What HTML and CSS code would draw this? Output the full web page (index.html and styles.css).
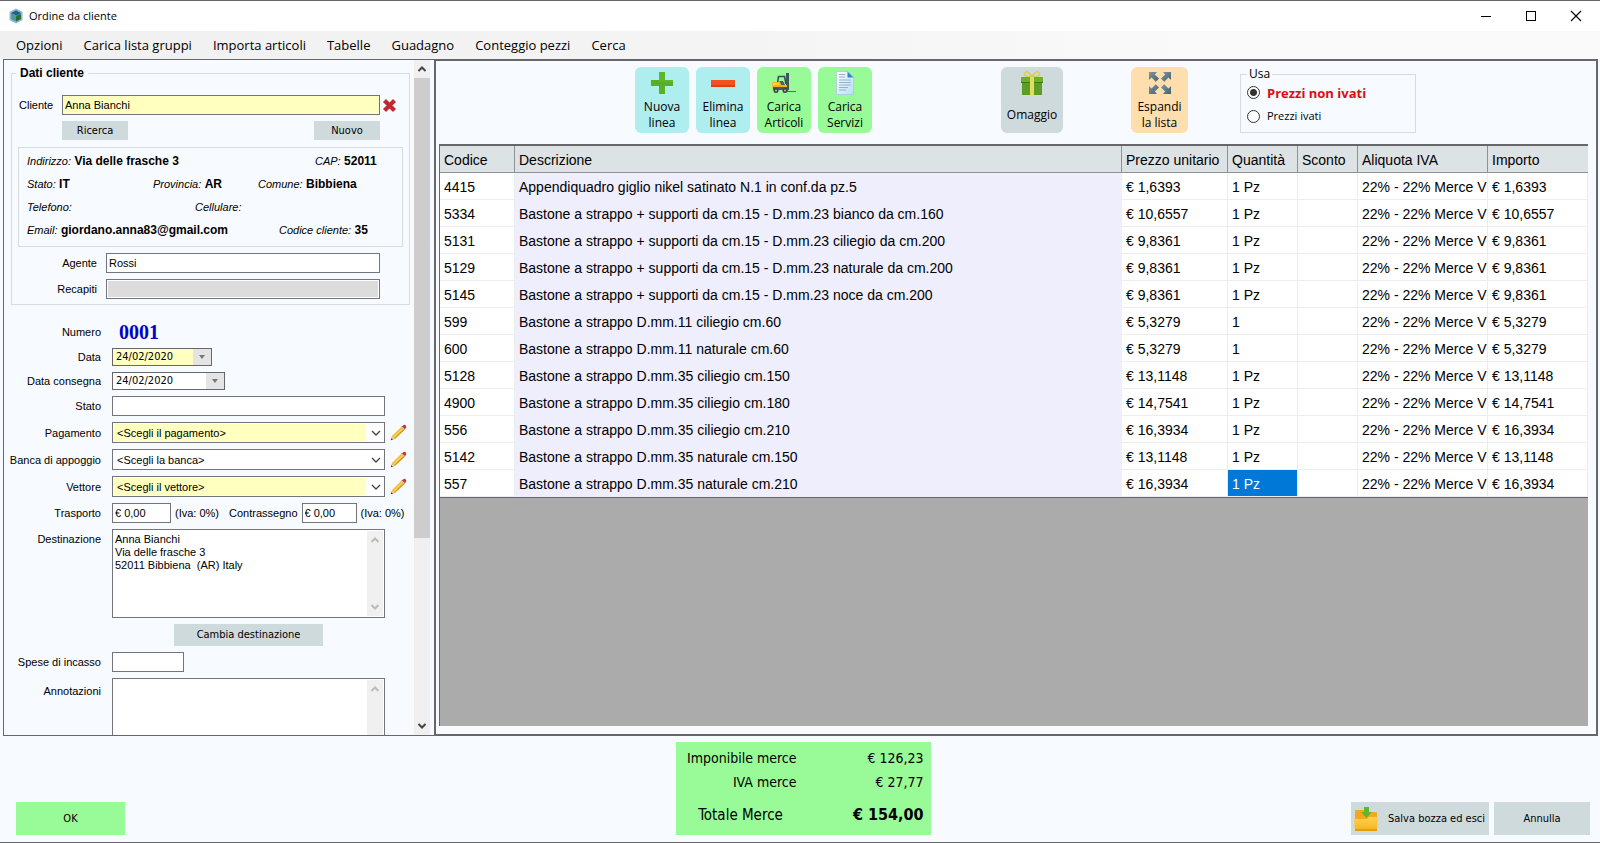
FILE: index.html
```html
<!DOCTYPE html>
<html lang="it">
<head>
<meta charset="utf-8">
<title>Ordine da cliente</title>
<link rel="stylesheet" href="styles.css">
</head>
<body>
<svg class="defs" width="0" height="0" aria-hidden="true">
  <defs>
    <linearGradient id="gPlus" x1="0" y1="0" x2="0" y2="1"><stop offset="0" stop-color="#4fae1c"/><stop offset="1" stop-color="#5fb02a"/></linearGradient>
    <linearGradient id="gDoc" x1="0" y1="0" x2="1" y2="1"><stop offset="0" stop-color="#ffffff"/><stop offset="1" stop-color="#b9dcf6"/></linearGradient>
    <linearGradient id="gArr" x1="0" y1="0" x2="1" y2="1"><stop offset="0" stop-color="#7f96a2"/><stop offset="1" stop-color="#46606e"/></linearGradient>
    <linearGradient id="gFold" x1="0" y1="0" x2="0" y2="1"><stop offset="0" stop-color="#ffd24a"/><stop offset="1" stop-color="#f9b320"/></linearGradient>
    <symbol id="pencil" viewBox="0 0 17 17">
      <path d="M1 16 L2 12 L12 2.2 L15 5 L5 14.8Z" fill="#f3bb2d"/>
      <path d="M2.8 13 L12.8 3.2 L14 4.2 L4 14Z" fill="#f9d45a"/>
      <path d="M4 14.6 L14 4.8 L15 5.6 L5 14.8Z" fill="#d88d1c"/>
      <path d="M11.4 2.8 L13 1.4 Q14.4 .2 15.8 1.4 Q17 2.8 15.6 4.4 L14.2 5.6Z" fill="#c8382c"/>
      <path d="M11 3.2 L11.9 2.3 L14.8 5.1 L13.9 6Z" fill="#c9c4bb"/>
      <path d="M.8 16.3 L2 12.2 L4.8 14.9Z" fill="#e8c79a"/>
      <path d="M.8 16.3 L1.3 14.2 L2.9 15.7Z" fill="#333"/>
    </symbol>
    <symbol id="chev" viewBox="0 0 10 10"><path d="M1 3 L5 7 L9 3" fill="none" stroke="currentColor" stroke-width="1.3"/></symbol>
    <symbol id="down" viewBox="0 0 10 10"><path d="M1.5 3 L5 6.5 L8.500 3" fill="none" stroke="currentColor" stroke-width="2"/></symbol>
    <symbol id="up" viewBox="0 0 10 10"><path d="M1.5 7 L5 3.500 L8.500 7" fill="none" stroke="currentColor" stroke-width="2"/></symbol>
  </defs>
</svg>

<header class="titlebar">
  <svg class="app-icon" width="16" height="16" viewBox="0 0 16 16" aria-hidden="true">
    <path d="M8 .5 L14.500 4 V12 L8 15.500 L1.500 12 V4Z" fill="#8db9c8"/>
    <path d="M8 2.500 L12.800 5 V11 L8 13.500 L3.200 11 V5Z" fill="#4a94b8"/>
    <path d="M3.200 5 L8 7.500 L12.800 5 L8 2.500Z" fill="#245f92"/>
    <path d="M8 8 L12.800 6 V11 L8 13.500Z" fill="#2d6b2f"/>
    <path d="M5 6 L8.500 7.500 L8 10 L6 9Z" fill="#63a843"/>
  </svg>
  <h1 class="title">Ordine da cliente</h1>
  <div class="window-buttons">
    <button class="win" aria-label="Riduci a icona"><svg width="12" height="12" viewBox="0 0 12 12"><path d="M1 6.500 H11" stroke="#000"/></svg></button>
    <button class="win" aria-label="Ingrandisci"><svg width="12" height="12" viewBox="0 0 12 12"><rect x="1.500" y="1.500" width="9" height="9" fill="none" stroke="#000"/></svg></button>
    <button class="win" aria-label="Chiudi"><svg width="12" height="12" viewBox="0 0 12 12"><path d="M1 1 L11 11 M11 1 L1 11" stroke="#000" stroke-width="1.100"/></svg></button>
  </div>
</header>

<nav class="menu">
  <button>Opzioni</button><button>Carica lista gruppi</button><button>Importa articoli</button><button>Tabelle</button><button>Guadagno</button><button>Conteggio pezzi</button><button>Cerca</button>
</nav>

<main class="main">
  <section class="side">
    <form class="form">
      <fieldset class="client">
        <legend>Dati cliente</legend>
        <div class="client-row">
          <label for="cliente">Cliente</label>
          <input id="cliente" class="box yellow" value="Anna Bianchi">
          <button type="button" class="clear" aria-label="Rimuovi cliente"><svg width="13" height="13" viewBox="0 0 13 13"><path d="M3 .5 L6.500 4 L10 .5 L12.500 3 L9 6.500 L12.500 10 L10 12.500 L6.500 9 L3 12.500 L.5 10 L4 6.500 L.5 3Z" fill="#c9252b" stroke="#a5161c" stroke-width=".8"/></svg></button>
        </div>
        <div class="client-buttons">
          <button type="button" class="btn small">Ricerca</button>
          <button type="button" class="btn small">Nuovo</button>
        </div>
        <div class="details">
          <div class="drow r1"><p><i>Indirizzo:</i> <b>Via delle frasche 3</b></p><p><i>CAP:</i> <b>52011</b></p></div>
          <div class="drow r2"><p><i>Stato:</i> <b>IT</b></p><p><i>Provincia:</i> <b>AR</b></p><p><i>Comune:</i> <b>Bibbiena</b></p></div>
          <div class="drow r3"><p><i>Telefono:</i></p><p><i>Cellulare:</i></p></div>
          <div class="drow r4"><p><i>Email:</i> <b>giordano.anna83@gmail.com</b></p><p><i>Codice cliente:</i> <b>35</b></p></div>
        </div>
        <div class="agent-row"><label for="agente">Agente</label><input id="agente" class="box" value="Rossi"></div>
        <div class="agent-row"><label for="recapiti">Recapiti</label><input id="recapiti" class="box disabled" disabled></div>
      </fieldset>

      <div class="fields">
        <div class="field"><span class="lab">Numero</span><output class="number">0001</output></div>
        <div class="field"><label class="lab" for="data">Data</label>
          <div class="date yellow"><input id="data" value="24/02/2020"><button type="button" aria-label="Apri calendario"><svg width="6" height="4" viewBox="0 0 6 4"><path d="M0 0 H6 L3 4Z" fill="#777"/></svg></button></div></div>
        <div class="field"><label class="lab" for="consegna">Data consegna</label>
          <div class="date long"><input id="consegna" value="24/02/2020"><button type="button" aria-label="Apri calendario"><svg width="6" height="4" viewBox="0 0 6 4"><path d="M0 0 H6 L3 4Z" fill="#777"/></svg></button></div></div>
        <div class="field"><label class="lab" for="stato">Stato</label><input id="stato" class="box wide"></div>
        <div class="field"><label class="lab" for="pagamento">Pagamento</label>
          <div class="combo wide"><select id="pagamento" class="yellow-sel"><option>&lt;Scegli il pagamento&gt;</option></select><svg width="10" height="10"><use href="#chev"/></svg></div>
          <button type="button" class="edit" aria-label="Modifica pagamento"><svg width="17" height="17"><use href="#pencil"/></svg></button></div>
        <div class="field"><label class="lab" for="banca">Banca di appoggio</label>
          <div class="combo wide"><select id="banca"><option>&lt;Scegli la banca&gt;</option></select><svg width="10" height="10"><use href="#chev"/></svg></div>
          <button type="button" class="edit" aria-label="Modifica banca"><svg width="17" height="17"><use href="#pencil"/></svg></button></div>
        <div class="field"><label class="lab" for="vettore">Vettore</label>
          <div class="combo wide"><select id="vettore" class="yellow-sel"><option>&lt;Scegli il vettore&gt;</option></select><svg width="10" height="10"><use href="#chev"/></svg></div>
          <button type="button" class="edit" aria-label="Modifica vettore"><svg width="17" height="17"><use href="#pencil"/></svg></button></div>
        <div class="field"><label class="lab" for="trasporto">Trasporto</label>
          <div class="costs"><input id="trasporto" class="box money" value="€ 0,00"><span class="iva">(Iva: 0%)</span><label class="contr" for="contrassegno">Contrassegno</label><input id="contrassegno" class="box money cod" value="€ 0,00"><span class="iva">(Iva: 0%)</span></div></div>
        <div class="field top"><label class="lab" for="dest">Destinazione</label>
          <div class="area wide"><textarea id="dest">Anna Bianchi
Via delle frasche 3
52011 Bibbiena  (AR) Italy</textarea><div class="mini-scroll"><svg width="10" height="10"><use href="#up"/></svg><svg width="10" height="10"><use href="#down"/></svg></div></div></div>
        <div class="field"><span class="lab"></span><div class="wide center"><button type="button" class="btn change">Cambia destinazione</button></div></div>
        <div class="field"><label class="lab" for="spese">Spese di incasso</label><input id="spese" class="box short"></div>
        <div class="field top notes"><label class="lab" for="note">Annotazioni</label>
          <div class="area wide"><textarea id="note"></textarea><div class="mini-scroll"><svg width="10" height="10"><use href="#up"/></svg><svg width="10" height="10"><use href="#down"/></svg></div></div></div>
      </div>
    </form>
    <div class="scroll"><svg width="10" height="10"><use href="#up"/></svg><div class="track"><div class="thumb"></div></div><svg width="10" height="10"><use href="#down"/></svg></div>
  </section>

  <section class="work">
    <div class="toolbar">
      <button class="tool cyan"><svg width="24" height="24" viewBox="0 0 24 24"><path d="M9 1 H15 V9 H23 V15 H15 V23 H9 V15 H1 V9 H9Z" fill="url(#gPlus)"/><path d="M9 1 H15 V9 H23 V11 H9Z" fill="#6cc035" opacity=".5"/></svg><span>Nuova<br>linea</span></button>
      <button class="tool cyan"><svg width="24" height="24" viewBox="0 0 24 24"><rect x="0" y="9" width="24" height="7" fill="#f4511e"/><rect x="0" y="14" width="24" height="2" fill="#dd4012"/></svg><span>Elimina<br>linea</span></button>
      <button class="tool green"><svg width="24" height="24" viewBox="0 0 24 24">
        <path d="M14 2 H17 V19 H14Z" fill="#43545c"/><path d="M17 20 H24 V21 H14 V19Z" fill="#5a6a6c"/>
        <path d="M5.500 12 L6.500 5.500 H12.500 L14 13" fill="none" stroke="#34505a" stroke-width="1.600"/>
        <path d="M7.500 13 V10 H11 L13 14 H7.500Z" fill="#4b5c60"/>
        <path d="M0 12 Q0 11 2 11 H8 L9.500 14 H15 V19 H1 Q0 16 0 12Z" fill="#f2b21b"/><path d="M1 16 H15 V19 H1Z" fill="#51565a"/><path d="M1 12 H7 V14 H1Z" fill="#ffd84f"/>
        <circle cx="4" cy="19.500" r="2.500" fill="#374248"/><circle cx="4" cy="19.500" r="1" fill="#b4bfc2"/><circle cx="13" cy="19.500" r="2.500" fill="#374248"/><circle cx="13" cy="19.500" r="1" fill="#b4bfc2"/>
      </svg><span>Carica<br>Articoli</span></button>
      <button class="tool green"><svg width="24" height="24" viewBox="0 0 24 24"><path d="M3.500 .5 H15 L20.500 6 V23.500 H3.500Z" fill="url(#gDoc)" stroke="#a9c9e2" stroke-width=".8"/><path d="M14.500 .5 L20.500 6.500 H14.500Z" fill="#2e86c9"/><path d="M6 3.500 H12 M6 6 H12 M6 9 H18 M6 11.500 H18 M6 14 H18 M6 16.500 H15 M6 19 H13" stroke="#8fb2cf" stroke-width="1"/></svg><span>Carica<br>Servizi</span></button>
      <button class="tool gray gift"><svg width="24" height="24" viewBox="0 0 24 24"><path d="M12 6 Q4 6 4.500 2.500 Q6 -.5 9 2 Q11 4 12 6 Q13 4 15 2 Q18 -.5 19.500 2.500 Q20 6 12 6Z" fill="none" stroke="#d5cf62" stroke-width="1.800"/><rect x="1" y="6" width="22" height="5" fill="#6fae2b"/><rect x="2" y="11" width="20" height="13" fill="#5c9c28"/><path d="M1 11 H23 V12 H1Z" fill="#3f7a1a"/><rect x="10" y="6" width="4" height="18" fill="#e2dc5c"/></svg><span>Omaggio</span></button>
      <button class="tool orange"><svg width="24" height="24" viewBox="0 0 24 24"><g fill="url(#gArr)"><path d="M1 1 H9 L6.800 3.400 L11 7.600 L7.800 10.800 L3.500 6.500 L1 9Z"/><path d="M23 1 V9 L20.500 6.500 L16.200 10.800 L13 7.600 L17.200 3.400 L15 1Z"/><path d="M1 23 V15 L3.500 17.500 L7.800 13.200 L11 16.400 L6.800 20.600 L9 23Z"/><path d="M23 23 H15 L17.200 20.600 L13 16.400 L16.200 13.200 L20.500 17.500 L23 15Z"/></g></svg><span>Espandi<br>la lista</span></button>
      <fieldset class="prices">
        <legend>Usa</legend>
        <label class="strong"><input type="radio" name="prezzi" checked>Prezzi non ivati</label>
        <label><input type="radio" name="prezzi">Prezzi ivati</label>
      </fieldset>
    </div>
    <div class="grid-wrap">
      <table class="grid">
        <colgroup><col class="c1"><col><col class="c3"><col class="c4"><col class="c5"><col class="c6"><col class="c7"></colgroup>
        <thead><tr><th>Codice</th><th>Descrizione</th><th>Prezzo unitario</th><th>Quantità</th><th>Sconto</th><th>Aliquota IVA</th><th>Importo</th></tr></thead>
        <tbody>
          <tr><td>4415</td><td>Appendiquadro giglio nikel satinato N.1 in conf.da pz.5</td><td>€ 1,6393</td><td>1 Pz</td><td></td><td>22% - 22% Merce V</td><td>€ 1,6393</td></tr>
          <tr><td>5334</td><td>Bastone a strappo + supporti da cm.15 - D.mm.23 bianco da cm.160</td><td>€ 10,6557</td><td>1 Pz</td><td></td><td>22% - 22% Merce V</td><td>€ 10,6557</td></tr>
          <tr><td>5131</td><td>Bastone a strappo + supporti da cm.15 - D.mm.23 ciliegio da cm.200</td><td>€ 9,8361</td><td>1 Pz</td><td></td><td>22% - 22% Merce V</td><td>€ 9,8361</td></tr>
          <tr><td>5129</td><td>Bastone a strappo + supporti da cm.15 - D.mm.23 naturale da cm.200</td><td>€ 9,8361</td><td>1 Pz</td><td></td><td>22% - 22% Merce V</td><td>€ 9,8361</td></tr>
          <tr><td>5145</td><td>Bastone a strappo + supporti da cm.15 - D.mm.23 noce da cm.200</td><td>€ 9,8361</td><td>1 Pz</td><td></td><td>22% - 22% Merce V</td><td>€ 9,8361</td></tr>
          <tr><td>599</td><td>Bastone a strappo D.mm.11 ciliegio cm.60</td><td>€ 5,3279</td><td>1</td><td></td><td>22% - 22% Merce V</td><td>€ 5,3279</td></tr>
          <tr><td>600</td><td>Bastone a strappo D.mm.11 naturale cm.60</td><td>€ 5,3279</td><td>1</td><td></td><td>22% - 22% Merce V</td><td>€ 5,3279</td></tr>
          <tr><td>5128</td><td>Bastone a strappo D.mm.35 ciliegio cm.150</td><td>€ 13,1148</td><td>1 Pz</td><td></td><td>22% - 22% Merce V</td><td>€ 13,1148</td></tr>
          <tr><td>4900</td><td>Bastone a strappo D.mm.35 ciliegio cm.180</td><td>€ 14,7541</td><td>1 Pz</td><td></td><td>22% - 22% Merce V</td><td>€ 14,7541</td></tr>
          <tr><td>556</td><td>Bastone a strappo D.mm.35 ciliegio cm.210</td><td>€ 16,3934</td><td>1 Pz</td><td></td><td>22% - 22% Merce V</td><td>€ 16,3934</td></tr>
          <tr><td>5142</td><td>Bastone a strappo D.mm.35 naturale cm.150</td><td>€ 13,1148</td><td>1 Pz</td><td></td><td>22% - 22% Merce V</td><td>€ 13,1148</td></tr>
          <tr><td>557</td><td>Bastone a strappo D.mm.35 naturale cm.210</td><td>€ 16,3934</td><td class="selected">1 Pz</td><td></td><td>22% - 22% Merce V</td><td>€ 16,3934</td></tr>
        </tbody>
      </table>
    </div>
  </section>
</main>

<footer class="footer">
  <div class="foot-left"><button class="ok">OK</button></div>
  <dl class="totals">
    <div><dt>Imponibile merce</dt><dd>€ 126,23</dd></div>
    <div><dt>IVA merce</dt><dd>€ 27,77</dd></div>
    <div class="grand"><dt>Totale Merce</dt><dd>€ 154,00</dd></div>
  </dl>
  <div class="foot-right">
    <button class="btn save"><svg width="24" height="24" viewBox="0 0 24 24"><path d="M1 4 Q1 3 2 3 H9 L11 5 H22 Q23 5 23 6 V23 H1Z" fill="#f5a81c"/><path d="M0 12 H13 L15 10 H24 L23 23 H1Z" fill="url(#gFold)"/><path d="M1 22 H23 V24 H1Z" fill="#e79a14"/><path d="M10 0 H15 V5 H18 L12.500 11 L7 5 H10Z" fill="#62b52e"/></svg><span>Salva bozza ed esci</span></button>
    <button class="btn cancel">Annulla</button>
  </div>
</footer>
</body>
</html>
```
FILE: styles.css
```css
* { box-sizing: border-box; }
:root {
  --ui: "Open Sans", "Noto Sans", sans-serif;
  --form: "Liberation Sans", Arial, sans-serif;
  --tahoma: "DejaVu Sans Condensed", "Noto Sans", sans-serif;
  --line: #66666b;
  --pale: #f7faff;
  --yellow: #ffffc0;
  --gray-btn: #cfdadd;
}
body {
  margin: 0;
  height: 100vh;
  display: flex;
  flex-direction: column;
  overflow: hidden;
  background: var(--pale);
  border-top: 1px solid var(--line);
  border-bottom: 1px solid var(--line);
  font: 11px/14px var(--tahoma);
  color: #000;
}
button, input, select, textarea { font: inherit; color: inherit; margin: 0; border-radius: 0; }
button { border: 0; padding: 0; background: none; }
svg { display: block; flex: none; }
p, dl, dd { margin: 0; }
.defs { position: absolute; }

.titlebar { flex: none; height: 30px; background: #fff; display: flex; align-items: center; padding: 0 4px 0 8px; gap: 5px; }
.title { margin: 0; flex: 1; font: 11px/16px var(--ui); }
.window-buttons { display: flex; gap: 5px; }
.win { width: 40px; height: 28px; display: grid; place-items: center; }

.menu { flex: none; height: 28px; display: flex; align-items: center; gap: 21px; padding: 0 16px; background: linear-gradient(90deg, #f0f0f0, #f4f4f4 45%, #fafafa 75%); font: 13px/20px var(--ui); }

.main { flex: 1; min-height: 0; display: flex; padding: 0 2px 0 3px; }
.side { flex: none; width: 432px; display: flex; border: 1px solid var(--line); padding-right: 4px; }
.form { flex: 1; min-width: 0; overflow: hidden; }
.scroll { flex: none; width: 16px; display: flex; flex-direction: column; align-items: center; gap: 4px; padding: 4px 0; background: #f0f0f0; color: #444; }
.track { flex: 1; align-self: stretch; }
.thumb { height: 72%; background: #cdcdcd; }

.client { margin: 6px 4px 0 7px; padding: 15px 6px 5px; border: 1px solid #d5dde2; min-width: 0; }
.client legend { padding: 0 4px; margin-left: -2px; font: bold 12px/14px var(--form); }
.client label, .lab, .contr { font-family: var(--form); }
.client-row { display: flex; align-items: center; }
.client-row label { width: 44px; padding-left: 1px; }
.client-row .box { flex: 1; min-width: 0; }
.clear { margin: 0 7px 0 3px; }
.box { height: 20px; border: 1px solid #74747c; background: #fff; padding: 0 2px; font: 11px/14px var(--form); outline: 0; }
.box.yellow, .date.yellow input { background: var(--yellow); }
.box.disabled { background: #dcdcdc; box-shadow: inset 0 0 0 1px #fff; }
.btn { background: var(--gray-btn); }
.small { width: 66px; height: 19px; }
.client-buttons { display: flex; justify-content: space-between; margin: 6px 23px 7px 44px; }
.details { border: 1px solid #d5dde2; padding: 2px 0 4px 8px; margin-bottom: 6px; font: 12px/23px var(--form); }
.drow { display: grid; white-space: pre; }
.details i { font-size: 11px; }
.r1 { grid-template-columns: 288px 1fr; }
.r2 { grid-template-columns: 126px 105px 1fr; }
.r3 { grid-template-columns: 168px 1fr; }
.r4 { grid-template-columns: 252px 1fr; }
.agent-row { display: flex; align-items: center; gap: 9px; margin-right: 23px; }
.agent-row + .agent-row { margin-top: 6px; }
.agent-row label { width: 79px; text-align: right; }
.agent-row .box { flex: 1; min-width: 0; }

.fields { display: flex; flex-direction: column; gap: 6px; margin-top: 17px; }
.field { display: flex; align-items: center; }
.field.top { align-items: flex-start; }
.lab { flex: none; width: 97px; margin-right: 11px; text-align: right; white-space: nowrap; }
.top .lab { padding-top: 3px; }
.notes .lab { padding-top: 6px; }
.wide { width: 273px; }
.number { padding-left: 7px; font: bold 20px/20px "Liberation Serif", serif; color: #00c; }
.date { display: flex; width: 100px; height: 18px; border: 1px solid #66666b; background: #fff; }
.date.long { width: 113px; }
.date input { flex: 1; min-width: 0; border: 0; padding: 0 3px; background: #fff; }
.date button { width: 18px; display: grid; place-items: center; background: #e4e4e4; }
.combo { display: grid; align-items: center; height: 21px; }
.combo select { grid-area: 1 / 1; height: 21px; width: 100%; appearance: none; border: 1px solid #74747c; background: #fff; padding: 0 4px; font: 11px/16px var(--form); }
.combo .yellow-sel { background: linear-gradient(90deg, var(--yellow) calc(100% - 19px), #fff calc(100% - 19px)); box-shadow: inset 0 0 0 1px #fff; }
.combo svg { grid-area: 1 / 1; justify-self: end; margin-right: 4px; color: #444; pointer-events: none; }
.edit { margin-left: 5px; height: 17px; }
.costs { display: flex; align-items: center; font-family: var(--form); }
.money { width: 59px; }
.money.cod { width: 55px; }
.iva { margin-left: 4px; white-space: nowrap; }
.contr { margin: 0 4px 0 10px; }
.area { display: flex; height: 89px; border: 1px solid #74747c; background: #fff; padding: 1px; }
.area textarea { flex: 1; min-width: 0; border: 0; padding: 2px 1px; resize: none; overflow: hidden; outline: 0; font: 11px/13px var(--form); }
.mini-scroll { width: 16px; padding: 4px 0; display: flex; flex-direction: column; align-items: center; justify-content: space-between; background: #f0f0f0; color: #bbb; }
.center { display: flex; justify-content: center; }
.change { width: 149px; height: 22px; }
.short { width: 72px; }

.work { flex: 1; min-width: 0; display: flex; flex-direction: column; border: 2px solid var(--line); border-left-width: 1px; padding: 6px 8px 8px 3px; }
.toolbar { flex: none; display: flex; align-items: flex-start; gap: 7px; padding-left: 196px; height: 77px; }
.tool { width: 54px; height: 66px; border-radius: 6px; display: flex; flex-direction: column; align-items: center; padding-top: 4px; gap: 4px; font: 12px/16px var(--ui); }
.cyan { background: #afeeee; }
.green { background: #98fb98; }
.gray { background: var(--gray-btn); }
.orange { background: #ffdead; width: 57px; margin-left: 61px; }
.gift { width: 62px; margin-left: 122px; gap: 12px; }
.prices { width: 176px; height: 66px; margin: 0 0 0 45px; padding: 2px 6px 0; border: 1px solid #d5dde2; }
.prices legend { padding: 0 2px; font: 12px/14px var(--ui); }
.prices label { display: flex; align-items: center; gap: 7px; height: 28px; font: 11px/16px var(--ui); }
.prices .strong { height: 19px; font: bold 13px/18px var(--ui); color: #e00b12; }
.prices input { appearance: none; flex: none; width: 13px; height: 13px; margin: 0; border: 1px solid #333; border-radius: 50%; background: #fff; }
.prices input:checked { background: radial-gradient(#333 0 3px, #fff 4px); }

.grid-wrap { flex: 1; min-height: 0; background: #ababab; border-top: 2px solid var(--line); border-left: 1px solid var(--line); }
.grid { width: 100%; table-layout: fixed; border-collapse: separate; border-spacing: 0; border-bottom: 1px solid #66666b; font: 14px/20px var(--form); }
.c1 { width: 75px; } .c3 { width: 106px; } .c4 { width: 70px; } .c5 { width: 60px; } .c6 { width: 130px; } .c7 { width: 100px; }
.grid th, .grid td { height: 27px; padding: 2px 0 0 4px; text-align: left; font-weight: normal; white-space: nowrap; overflow: hidden; }
.grid th { background: #dde2e5; border-bottom: 1px solid #8e9294; border-right: 1px solid #8e9294; }
.grid th:last-child { border-right: 0; }
.grid td { background: #fff; border-right: 1px solid #ecedf0; border-bottom: 1px solid #ecedf0; }
.grid td:nth-child(2) { background: #eeeefd; border-color: #eeeefd; }
.grid td.selected { background: #0078d7; color: #fff; }

.footer { flex: none; height: 106px; display: grid; grid-template-columns: 1fr auto 1fr; padding: 6px 10px 7px 16px; }
.foot-left, .foot-right { display: flex; align-items: flex-end; gap: 5px; }
.foot-right { justify-content: flex-end; }
.ok { width: 109px; height: 33px; background: #98fb98; }
.totals { width: 255px; height: 93px; background: #98fb98; padding: 4px 7px 0 9px; font: 14px/24px var(--tahoma); }
.totals div { display: flex; justify-content: space-between; }
.totals dt { width: 112px; text-align: right; white-space: nowrap; }
.totals .grand { margin-top: 9px; font-size: 15px; }
.grand dt { text-align: center; }
.grand dd { font-weight: bold; font-size: 16px; }
.save { width: 138px; height: 33px; display: flex; align-items: center; gap: 10px; padding: 0 3px; white-space: nowrap; }
.cancel { width: 96px; height: 33px; }
```
